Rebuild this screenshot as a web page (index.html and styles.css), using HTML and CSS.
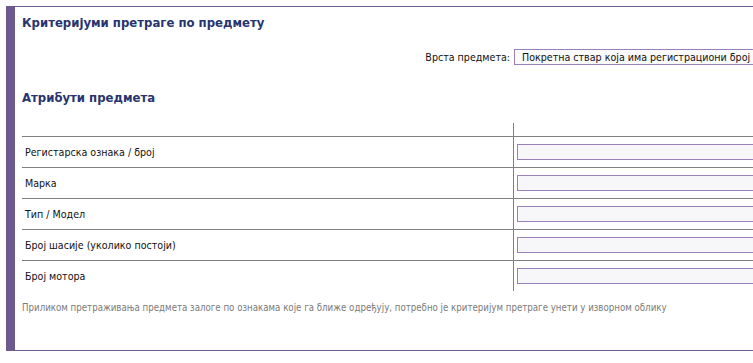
FILE: index.html
```html
<!DOCTYPE html>
<html lang="sr">
<head>
<meta charset="utf-8">
<title>Критеријуми претраге</title>
<link rel="stylesheet" href="styles.css">
</head>
<body>
<div class="panel">
  <h2 class="title">Критеријуми претраге по предмету</h2>
  <div class="type-row">
    <span class="type-label">Врста предмета:</span>
    <div class="select-box">Покретна ствар која има регистрациони број</div>
  </div>
  <h2 class="title sub">Атрибути предмета</h2>
  <div class="attrs">
    <div class="cell head"></div>
    <div class="cell head val"></div>
    <div class="cell lbl">Регистарска ознака / број</div>
    <div class="cell val"><div class="inp"></div></div>
    <div class="cell lbl">Марка</div>
    <div class="cell val"><div class="inp"></div></div>
    <div class="cell lbl">Тип / Модел</div>
    <div class="cell val"><div class="inp"></div></div>
    <div class="cell lbl">Број шасије (уколико постоји)</div>
    <div class="cell val"><div class="inp"></div></div>
    <div class="cell lbl">Број мотора</div>
    <div class="cell val"><div class="inp"></div></div>
  </div>
  <p class="note">Приликом претраживања предмета залоге по ознакама које га ближе одређују, потребно је критеријум претраге унети у изворном облику</p>
</div>
</body>
</html>
```
FILE: styles.css
```css
html, body { margin: 0; padding: 0; background: #fff; overflow: hidden; }
body { padding: 6px 0 0 6px; font-family: "DejaVu Sans Condensed", "DejaVu Sans", sans-serif; font-size: 10.6px; color: #111; }
.panel {
  width: 800px;
  height: 345px;
  box-sizing: border-box;
  border-top: 1px solid #6c5a8c;
  border-bottom: 1px solid #6c5a8c;
  border-left: 9px solid #6c5a8c;
  padding: 8px 0 0 7px;
}
.title { margin: 0; font-size: 13px; font-weight: bold; color: #28346e; line-height: 16px; }
.sub { margin-top: 25px; }
.type-row { display: flex; align-items: center; justify-content: flex-end; gap: 4px; margin-top: 18px; }
.type-label { font-size: 10.6px; }
.select-box {
  width: 283px;
  height: 14px;
  border: 1px solid #9a80b8;
  background: #fafafa;
  padding-left: 7px;
  line-height: 14px;
  font-size: 10.6px;
}
.attrs { display: grid; grid-template-columns: 491px 1fr; margin-top: 17px; }
.cell { height: 30px; border-top: 1px solid #808080; display: flex; align-items: center; }
.head { height: 13px; border-top: none; }
.val { border-left: 1px solid #808080; padding-left: 3px; }
.lbl { padding-left: 3px; }
.inp { width: 100%; height: 14px; border: 1px solid #9a80b8; background: #f7f6f8; }
.note { margin: 11px 0 0; font-size: 9.65px; color: #7a7a7a; }
```
